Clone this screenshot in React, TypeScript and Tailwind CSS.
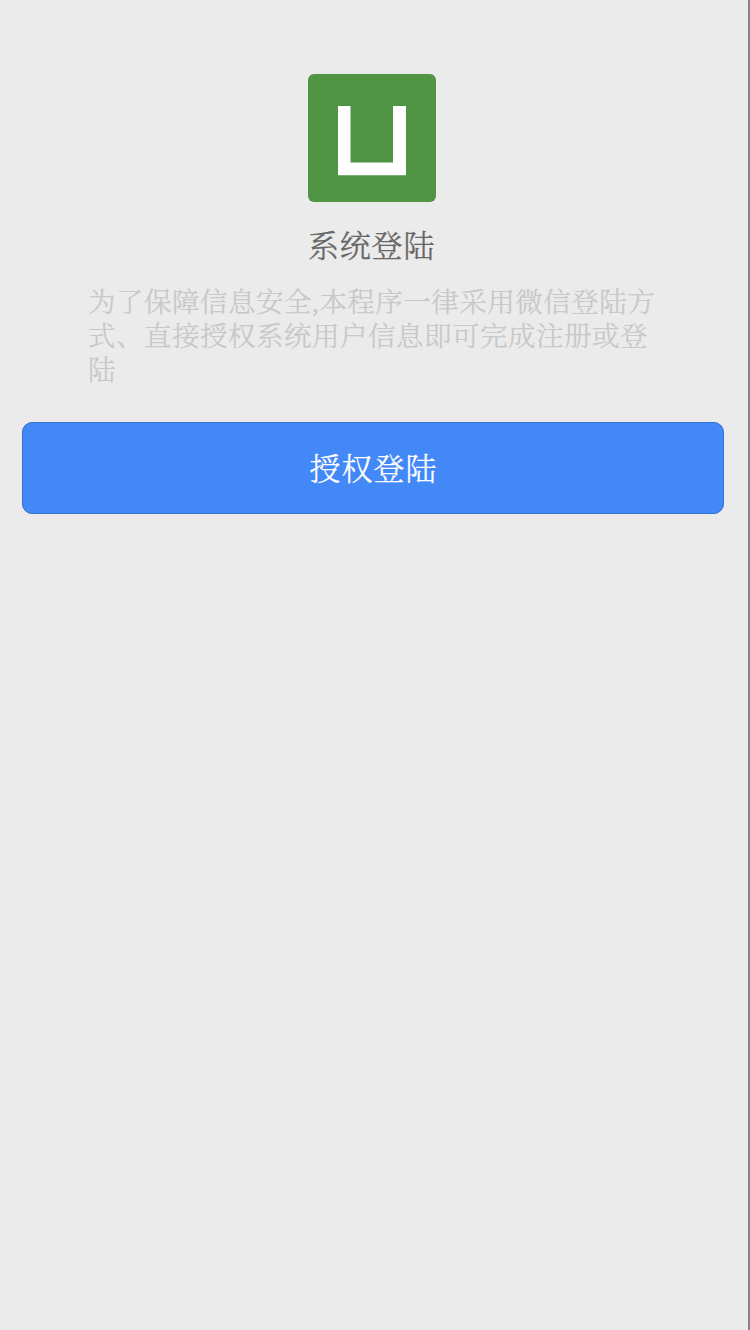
export default function App() {
  return (
    <main className="flex h-[1330px] w-[750px] flex-col border-r-2 border-[#858585] bg-[#ebebeb] pt-[74px] font-['Noto_Serif_CJK_SC','Noto_Sans_CJK_SC',serif] font-light">
      <svg className="ml-[308px] size-32 shrink-0" viewBox="0 0 128 128" aria-hidden="true">
        <rect width="128" height="128" rx="6" fill="#4f9544" />
        <path d="M30 32H42.500V88.500H85V32H98V101.300H30Z" fill="#fff" />
      </svg>
      <h1 className="mt-[22px] ml-[308px] text-[31px] leading-[40px] tracking-[0.8px] whitespace-nowrap text-[#666] [-webkit-text-stroke:0.35px_#666]">系统登陆</h1>
      <p className="mt-[19px] ml-[88px] text-[27.5px] leading-[34px] tracking-[0.5px] whitespace-nowrap text-[#c7c7c7] [-webkit-text-stroke:0.25px_#c7c7c7]">
        为了保障信息安全<span className="font-['Liberation_Serif',serif] leading-none">,</span>本程序一律采用微信登陆方<br />
        式、直接授权系统用户信息即可完成注册或登<br />
        陆
      </p>
      <button className="mt-[37px] ml-[22px] flex h-[92px] w-[702px] items-center justify-center rounded-[10px] border border-[#356fd0] bg-[#4288f7] pb-px pl-px text-[31px] tracking-[1px] text-white [-webkit-text-stroke:0.3px_white]">
        授权登陆
      </button>
    </main>
  );
}
